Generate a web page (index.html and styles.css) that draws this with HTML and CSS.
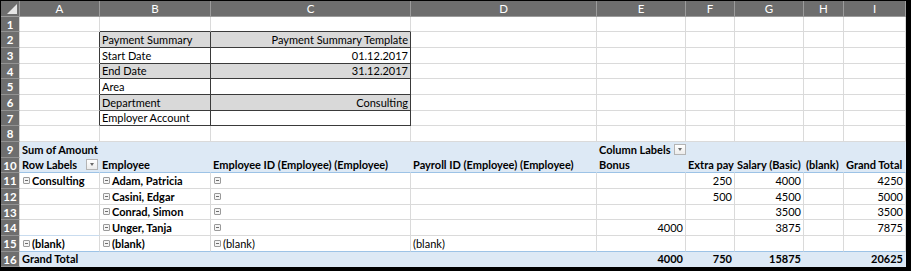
FILE: index.html
```html
<!DOCTYPE html>
<html>
<head>
<meta charset="utf-8">
<link rel="stylesheet" href="styles.css">
</head>
<body>
<div class="sheet">
  <div class="corner"><span class="tri"></span></div>
  <div class="ch">A</div><div class="ch">B</div><div class="ch">C</div><div class="ch">D</div><div class="ch">E</div><div class="ch">F</div><div class="ch">G</div><div class="ch">H</div><div class="ch">I</div>

  <div class="rh">1</div>
  <div class="c"></div><div class="c bb"></div><div class="c bb"></div><div class="c"></div><div class="c"></div><div class="c"></div><div class="c"></div><div class="c"></div><div class="c"></div>

  <div class="rh">2</div>
  <div class="c br"></div><div class="c bx gray">Payment Summary</div><div class="c bx gray r">Payment Summary Template</div><div class="c"></div><div class="c"></div><div class="c"></div><div class="c"></div><div class="c"></div><div class="c"></div>

  <div class="rh">3</div>
  <div class="c br"></div><div class="c bx">Start Date</div><div class="c bx r">01.12.2017</div><div class="c"></div><div class="c"></div><div class="c"></div><div class="c"></div><div class="c"></div><div class="c"></div>

  <div class="rh">4</div>
  <div class="c br"></div><div class="c bx gray">End Date</div><div class="c bx gray r">31.12.2017</div><div class="c"></div><div class="c"></div><div class="c"></div><div class="c"></div><div class="c"></div><div class="c"></div>

  <div class="rh">5</div>
  <div class="c br"></div><div class="c bx">Area</div><div class="c bx r"></div><div class="c"></div><div class="c"></div><div class="c"></div><div class="c"></div><div class="c"></div><div class="c"></div>

  <div class="rh">6</div>
  <div class="c br"></div><div class="c bx gray">Department</div><div class="c bx gray r">Consulting</div><div class="c"></div><div class="c"></div><div class="c"></div><div class="c"></div><div class="c"></div><div class="c"></div>

  <div class="rh">7</div>
  <div class="c br"></div><div class="c bx">Employer Account</div><div class="c bx r"></div><div class="c"></div><div class="c"></div><div class="c"></div><div class="c"></div><div class="c"></div><div class="c"></div>

  <div class="rh">8</div>
  <div class="c"></div><div class="c"></div><div class="c"></div><div class="c"></div><div class="c"></div><div class="c"></div><div class="c"></div><div class="c"></div><div class="c"></div>

  <div class="rh">9</div>
  <div class="c pv b">Sum of Amount</div><div class="c pv"></div><div class="c pv"></div><div class="c pv"></div><div class="c pv b">Column Labels<span class="dd"></span></div><div class="c pv"></div><div class="c pv"></div><div class="c pv"></div><div class="c pv"></div>

  <div class="rh">10</div>
  <div class="c pv b bl">Row Labels<span class="dd push"></span></div><div class="c pv b bl">Employee</div><div class="c pv b bl">Employee ID (Employee) (Employee)</div><div class="c pv b bl">Payroll ID (Employee) (Employee)</div><div class="c pv b bl">Bonus</div><div class="c pv b bl">Extra pay</div><div class="c pv b bl">Salary (Basic)</div><div class="c pv b bl">(blank)</div><div class="c pv b bl">Grand Total</div>

  <div class="rh">11</div>
  <div class="c b"><span class="col"></span>Consulting</div><div class="c b"><span class="col"></span>Adam, Patricia</div><div class="c"><span class="col"></span></div><div class="c"></div><div class="c"></div><div class="c r">250</div><div class="c r">4000</div><div class="c"></div><div class="c r">4250</div>

  <div class="rh">12</div>
  <div class="c"></div><div class="c b"><span class="col"></span>Casini, Edgar</div><div class="c"><span class="col"></span></div><div class="c"></div><div class="c"></div><div class="c r">500</div><div class="c r">4500</div><div class="c"></div><div class="c r">5000</div>

  <div class="rh">13</div>
  <div class="c"></div><div class="c b"><span class="col"></span>Conrad, Simon</div><div class="c"><span class="col"></span></div><div class="c"></div><div class="c"></div><div class="c"></div><div class="c r">3500</div><div class="c"></div><div class="c r">3500</div>

  <div class="rh">14</div>
  <div class="c lb"></div><div class="c b"><span class="col"></span>Unger, Tanja</div><div class="c"><span class="col"></span></div><div class="c"></div><div class="c r">4000</div><div class="c"></div><div class="c r">3875</div><div class="c"></div><div class="c r">7875</div>

  <div class="rh">15</div>
  <div class="c b bl"><span class="col"></span>(blank)</div><div class="c b bl"><span class="col"></span>(blank)</div><div class="c bl"><span class="col"></span>(blank)</div><div class="c bl">(blank)</div><div class="c bl"></div><div class="c bl"></div><div class="c bl"></div><div class="c bl"></div><div class="c bl"></div>

  <div class="rh">16</div>
  <div class="c pv b">Grand Total</div><div class="c pv"></div><div class="c pv"></div><div class="c pv"></div><div class="c pv b r">4000</div><div class="c pv b r">750</div><div class="c pv b r">15875</div><div class="c pv"></div><div class="c pv b r">20625</div>
</div>
</body>
</html>
```
FILE: styles.css
```css
html, body {
  margin: 0;
  padding: 0;
  background: #000;
}
body {
  width: 911px;
  height: 271px;
  overflow: hidden;
}
.sheet {
  margin: 1px 0 0 1px;
  width: 905px;
  display: grid;
  grid-template-columns: 19px 80px 111px 200px 186px 89px 49px 69px 40px 62px;
  grid-template-rows: repeat(17, 15.67px);
  background: #fff;
  font-family: Lato, "Liberation Sans", sans-serif;
  font-size: 11px;
  color: #000;
}
.corner {
  background: #6e6e6e;
  border-right: 1px solid #9c9c9c;
  border-bottom: 1px solid #9c9c9c;
  position: relative;
}
.tri {
  position: absolute;
  right: 2px;
  bottom: 2px;
  width: 0;
  height: 0;
  border-left: 10px solid transparent;
  border-bottom: 10px solid #e6e6e6;
}
.ch {
  background: #6e6e6e;
  color: #fff;
  border-right: 1px solid #9c9c9c;
  border-bottom: 1px solid #9c9c9c;
  text-align: center;
  font-size: 11.5px;
  line-height: 15px;
  overflow: hidden;
}
.rh {
  background: #6e6e6e;
  color: #fff;
  border-right: 1px solid #d4d4d4;
  border-bottom: 1px solid #939393;
  text-align: center;
  font-size: 11.5px;
  font-weight: bold;
  line-height: 15px;
  overflow: hidden;
}
.c {
  border-right: 1px solid #dadada;
  border-bottom: 1px solid #dadada;
  padding: 0 2px;
  white-space: nowrap;
  line-height: 15px;
  display: flex;
  align-items: center;
  min-width: 0;
}
.c:not(:empty) { position: relative; }
.r { justify-content: flex-end; }
.b { font-weight: bold; }
.bb { border-bottom-color: #3a3a3a; }
.br { border-right-color: #3a3a3a; }
.bx {
  border-right-color: #3a3a3a;
  border-bottom-color: #3a3a3a;
}
.gray { background: #d9d9d9; }
.pv {
  background: #dde9f5;
  border-right-color: transparent;
  border-bottom-color: transparent;
}
.bl { border-bottom-color: #9dc3e6; }
.lb { border-bottom-color: #c9dcef; }
.dd {
  display: inline-block;
  width: 12px;
  height: 11px;
  box-sizing: border-box;
  border: 1px solid #b4b4b4;
  background: linear-gradient(#ffffff, #ececec);
  margin-left: 3px;
  position: relative;
  flex: none;
}
.dd::after {
  content: "";
  position: absolute;
  left: 3px;
  top: 3px;
  border-left: 2.5px solid transparent;
  border-right: 2.5px solid transparent;
  border-top: 3px solid #6a6a6a;
}
.push { margin-left: auto; margin-right: -1px; }
.col {
  display: inline-block;
  width: 7px;
  height: 7px;
  box-sizing: border-box;
  border: 1px solid #9a9a9a;
  border-radius: 1px;
  background: #f4f4f4;
  margin: 0 2px 0 1px;
  position: relative;
  flex: none;
}
.col::after {
  content: "";
  position: absolute;
  left: 1px;
  top: 2px;
  width: 3px;
  height: 1px;
  background: #6e6e6e;
}
```
